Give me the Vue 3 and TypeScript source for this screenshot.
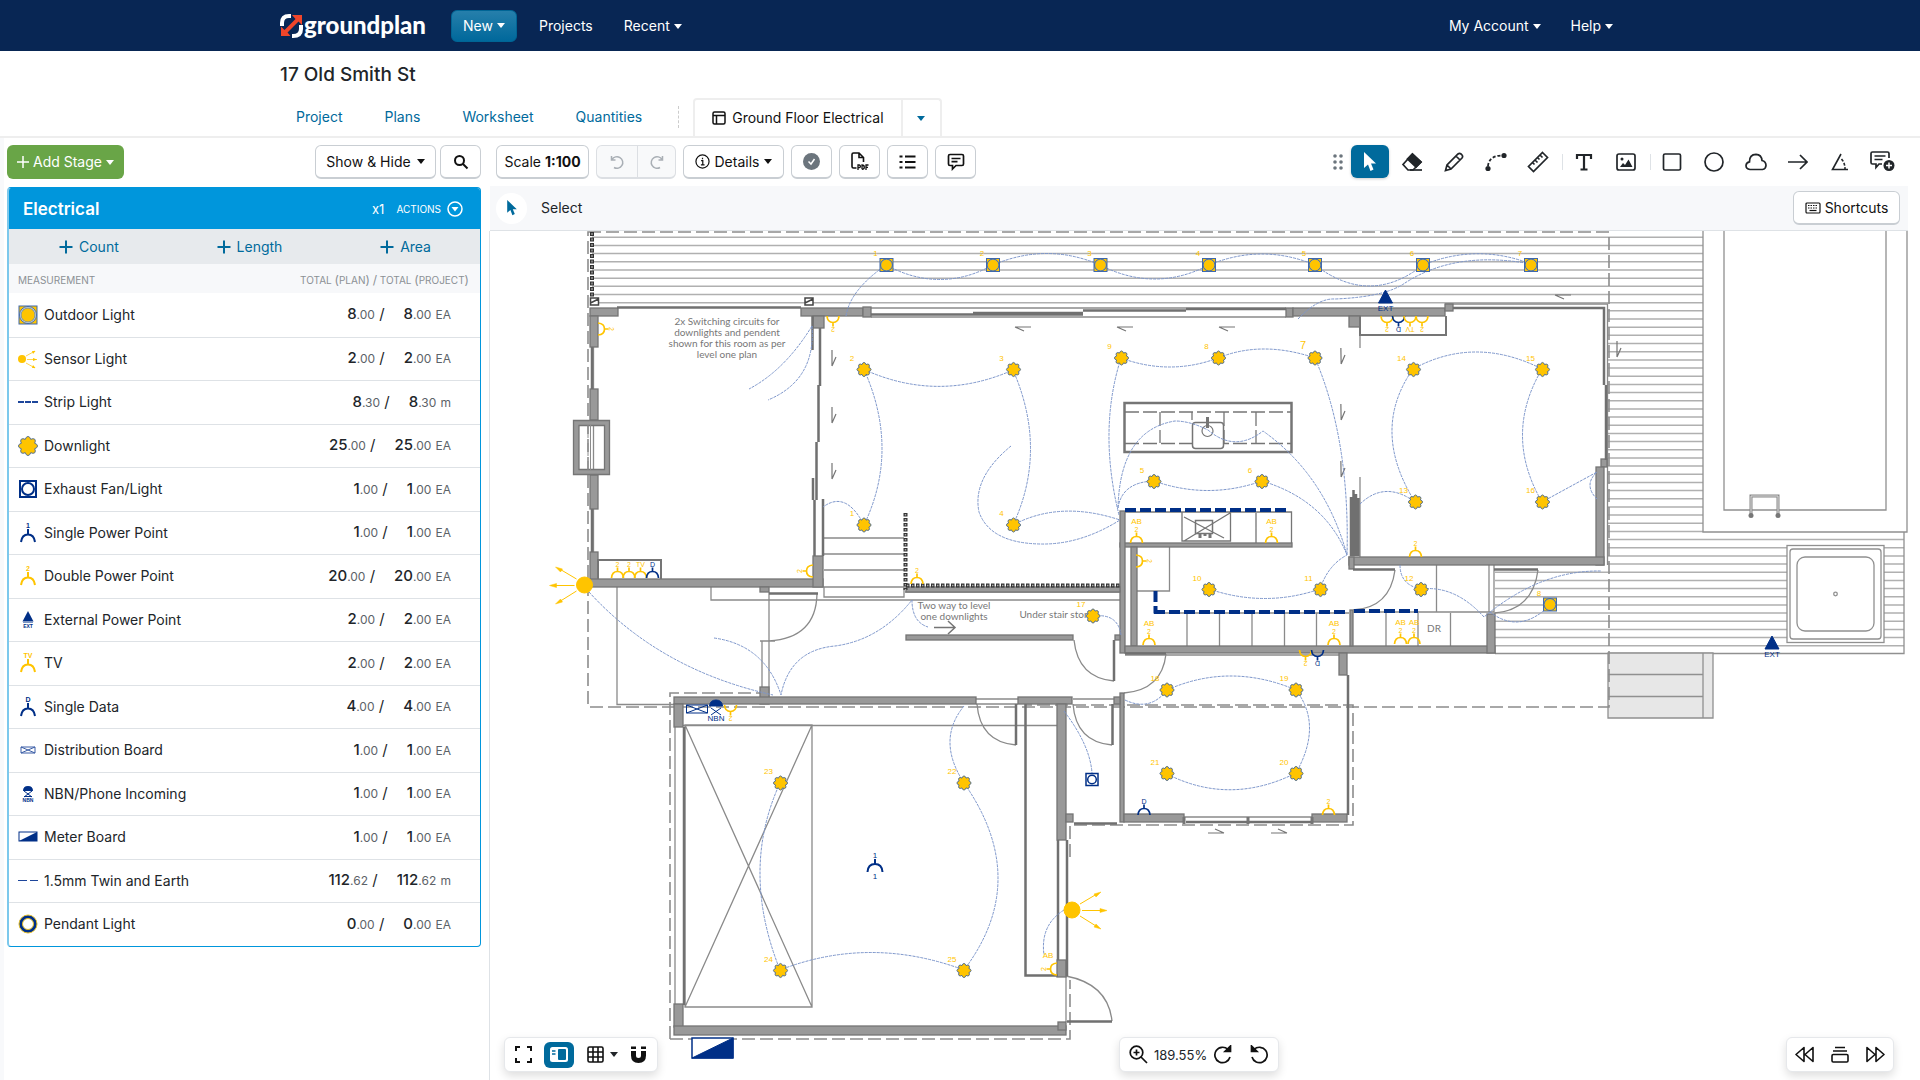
<script setup lang="ts">
type Kind =
  | 'outdoor' | 'sensor' | 'strip' | 'downlight' | 'exhaust' | 'outlet' | 'ext'
  | 'board' | 'nbn' | 'meter' | 'cable' | 'pendant'

interface Measurement {
  name: string
  kind: Kind
  whole: string
  part: string
  unit: string
  tag?: string
  color?: string
}

interface Outlet {
  x: number
  y: number
  turn: number
  tag: string
  color?: string
  ab?: boolean
}

const NAVY = '#002f87'
const AMBER = '#ffc400'

const measurements: Measurement[] = [
  { name: 'Outdoor Light', kind: 'outdoor', whole: '8', part: '.00', unit: 'EA' },
  { name: 'Sensor Light', kind: 'sensor', whole: '2', part: '.00', unit: 'EA' },
  { name: 'Strip Light', kind: 'strip', whole: '8', part: '.30', unit: 'm' },
  { name: 'Downlight', kind: 'downlight', whole: '25', part: '.00', unit: 'EA' },
  { name: 'Exhaust Fan/Light', kind: 'exhaust', whole: '1', part: '.00', unit: 'EA' },
  { name: 'Single Power Point', kind: 'outlet', tag: '1', color: NAVY, whole: '1', part: '.00', unit: 'EA' },
  { name: 'Double Power Point', kind: 'outlet', tag: '2', color: AMBER, whole: '20', part: '.00', unit: 'EA' },
  { name: 'External Power Point', kind: 'ext', whole: '2', part: '.00', unit: 'EA' },
  { name: 'TV', kind: 'outlet', tag: 'TV', color: AMBER, whole: '2', part: '.00', unit: 'EA' },
  { name: 'Single Data', kind: 'outlet', tag: 'D', color: NAVY, whole: '4', part: '.00', unit: 'EA' },
  { name: 'Distribution Board', kind: 'board', whole: '1', part: '.00', unit: 'EA' },
  { name: 'NBN/Phone Incoming', kind: 'nbn', whole: '1', part: '.00', unit: 'EA' },
  { name: 'Meter Board', kind: 'meter', whole: '1', part: '.00', unit: 'EA' },
  { name: '1.5mm Twin and Earth', kind: 'cable', whole: '112', part: '.62', unit: 'm' },
  { name: 'Pendant Light', kind: 'pendant', whole: '0', part: '.00', unit: 'EA' },
]

// Eight-lobed outline of a downlight symbol around the origin.
function lobes(r: number): string {
  const reach = [1.04, 0.96, 0.78, 0.96]
  return Array.from({ length: 32 }, (_, i) => {
    const a = (i / 32) * Math.PI * 2
    const d = r * reach[i % 4]
    return `${(Math.cos(a) * d).toFixed(2)},${(Math.sin(a) * d).toFixed(2)}`
  }).join(' ')
}
const lobesSmall = lobes(6.8)
const lobesLarge = lobes(9.2)

const downlights: [number, number][] = [
  [864, 525], [864, 369.5], [1013.5, 369.5], [1013.5, 525], [1154, 481.5], [1262, 481.5],
  [1315, 358], [1218.5, 358], [1121.5, 358], [1209, 589.5], [1320.5, 589.5], [1421, 589.5],
  [1415.5, 502], [1413.5, 369.5], [1542.5, 369.5], [1542.5, 502], [1093, 616], [1167, 690],
  [1296, 690], [1296, 773.5], [1167, 773.5], [964, 783], [780.5, 783], [780.5, 970.5], [964, 970.5],
]

const outdoorLights: [number, number][] = [
  [886.5, 265], [993, 265], [1100.5, 265], [1209, 265], [1315, 265], [1423, 265], [1531, 265], [1550, 604.5],
]

const outlets: Outlet[] = [
  { x: 617.5, y: 578, turn: 0, tag: '2' },
  { x: 629, y: 578, turn: 0, tag: '2' },
  { x: 640.5, y: 578, turn: 0, tag: 'TV' },
  { x: 652.5, y: 578, turn: 0, tag: 'D', color: NAVY },
  { x: 598, y: 329, turn: 90, tag: '2' },
  { x: 833, y: 316, turn: 180, tag: '2' },
  { x: 813, y: 571, turn: -90, tag: '2' },
  { x: 917, y: 584, turn: 0, tag: '2' },
  { x: 1136.5, y: 543, turn: 0, tag: '2', ab: true },
  { x: 1271.5, y: 543, turn: 0, tag: '2', ab: true },
  { x: 1136, y: 561, turn: 90, tag: '2' },
  { x: 1149, y: 645, turn: 0, tag: '2', ab: true },
  { x: 1334, y: 645, turn: 0, tag: '2', ab: true },
  { x: 1400.5, y: 644, turn: 0, tag: '2', ab: true },
  { x: 1414, y: 644, turn: 0, tag: '2', ab: true },
  { x: 1415.5, y: 557, turn: 0, tag: '2' },
  { x: 1387, y: 316, turn: 180, tag: '2' },
  { x: 1398.5, y: 316, turn: 180, tag: 'D', color: NAVY },
  { x: 1410, y: 316, turn: 180, tag: 'TV' },
  { x: 1422, y: 316, turn: 180, tag: '2' },
  { x: 1305.5, y: 650, turn: 180, tag: '2' },
  { x: 1317.5, y: 650, turn: 180, tag: 'D', color: NAVY },
  { x: 1144, y: 815, turn: 0, tag: 'D', color: NAVY },
  { x: 1328.5, y: 815, turn: 0, tag: '2' },
  { x: 730.5, y: 705, turn: 180, tag: '2' },
  { x: 1057, y: 969, turn: -90, tag: '2' },
]

// Solid walls: x, y, width, height.
const walls: [number, number, number, number][] = [
  [590, 308, 28, 8], [590, 316, 8, 31], [590, 389, 8, 31], [590, 475, 8, 34], [590, 552, 8, 28],
  [590, 579, 233, 8], [801, 308, 62, 8], [813, 316, 11, 12], [813, 556, 10, 31], [863, 307, 8, 10],
  [1286, 308, 7, 9], [1293, 308, 152, 8], [1349, 316, 11, 11], [1445, 304, 8, 7],
  [1601, 459, 6, 8], [1596, 467, 8, 98], [1349, 557, 255, 8], [1349, 557, 5, 12],
  [1120, 543, 172, 4], [1120, 511, 5, 142], [1131, 547, 6, 99], [1125, 646, 370, 7],
  [1350, 610, 3, 36], [1487, 614, 8, 39], [1339, 653, 8, 22], [1120, 693, 4, 129],
  [1124, 814, 60, 8], [1312, 814, 35, 8], [906, 587, 214, 5], [760, 587, 9, 5],
  [760, 687, 9, 17], [674, 697, 302, 7], [674, 704, 9, 23], [674, 1004, 9, 23],
  [674, 1026, 392, 9], [906, 635, 167, 5], [1115, 635, 5, 5], [1018, 697, 54, 7],
  [1057, 704, 9, 136], [1114, 697, 6, 7], [1066, 814, 7, 8], [1057, 960, 9, 17], [1058, 1022, 8, 8],
]

// Heavy strokes for door leaves, sliding panels and window frames.
const heavy = [
  'M617 307.5H801', 'M592 347V389 M592 509V552', 'M812.5 316V350', 'M820 328V386', 'M818.5 385V442', 'M816.5 442V500',
  'M813 478V500 M814.500 500V556 M823 499V556', 'M871 314.500H1083 M973 313H1083 M1083 310.500H1186 M1186 309H1286',
  'M1453 308H1604V385 M1606 385V460', 'M1351 497V556 M1353.500 490V556 M1356 494V556 M1358.500 498V556',
  'M1353 569.500H1395', 'M1494 569.500H1538', 'M769 593.500H818', 'M1114 640V681', 'M1016 704V745', 'M1112.500 704V745',
  'M1125 653.500H1166', 'M1348 675V815', 'M1186 822H1311', 'M1074 823.500H1117', 'M684 727V1005',
  'M1025.500 704V975.500H1058', 'M1058 840V960 M1067 840V976', 'M1067 1021.500H1112',
].join(' ')

// Light strokes: cabinetry, door swings, stairs, landings.
const light = [
  'M593.500 317V579', 'M871 308H1286 M871 317H1286', 'M1445 304H1607.500V565', 'M1360 316V348 M1360 477V557',
  'M824 538H904 M824 554H904 M824 570H904 M824 587H904V597H824Z', 'M617 587V704.500H674 M711 587V600H1120 M905 592H1120',
  'M817 594Q816 638 769 641', 'M769 592V697 M762 641V687', 'M760 641H775', 'M976 699H1018 M976 704H1018 M977 704Q980 742 1016 745',
  'M1074 640Q1078 678 1114 681', 'M1073 699H1114 M1073 704Q1076 742 1112 745', 'M1166 654Q1162 690 1124 693',
  'M1125 655H1339', 'M1395 570Q1390 608 1353 610', 'M1538 570Q1533 610 1494 613', 'M1436.500 565V612 M1489 565V612 M1494 565V612',
  'M1137 591H1169.500V547', 'M1155 613H1349 M1187 613V646 M1219.500 613V646 M1252 613V646 M1284.500 613V646 M1316.500 613V646',
  'M1386 613V646 M1418 613V646 M1450.500 613V646 M1353 612H1494', 'M1184 817H1312', 'M675 727V1004',
  'M683 725.500H1057', 'M685 725H812V1007H685Z M685 725L812 1007 M812 725L685 1007', 'M1066 976V1022 M1066 976Q1108 984 1112 1021',
].join(' ')

const wires = [
  'M846 316Q850 290 886 265Q940 294 993 265Q1047 242 1100 265Q1155 293 1209 265Q1262 243 1315 265Q1370 307 1423 265Q1477 243 1531 264',
  'M1531 264Q1456 250 1405 283Q1385 297 1335 299Q1318 298 1298 319',
  'M864 369.500Q938 403 1013 370Q1048 450 1013 525Q1060 500 1120 520', 'M864 369.500Q900 450 864 525Q846 490 823 507',
  'M1011 446Q972 478 979 512Q990 543 1040 544Q1080 545 1120 520', 'M1121 358Q1170 376 1218 358Q1262 340 1315 358Q1350 440 1347 555',
  'M1121 358Q1098 430 1119 515', 'M1118 508Q1120 430 1175 421Q1190 421 1208 430Q1235 453 1263 431Q1325 475 1347 555',
  'M1118 508Q1122 482 1154 481Q1208 500 1262 481Q1325 500 1347 555', 'M1209 589Q1265 608 1320 589Q1328 565 1347 555',
  'M1415 502Q1370 430 1413 369Q1475 335 1542 369Q1503 435 1542 502L1597 472Q1583 485 1597 499', 'M1360 504Q1385 480 1415 502',
  'M1400 565Q1400 585 1421 589Q1455 585 1484 617Q1540 570 1601 571', 'M1490 612Q1520 635 1550 605',
  'M812 326Q785 370 749 389', 'M812 326Q816 380 768 400', 'M589 592Q660 670 773 695',
  'M714 638Q765 645 781 695Q790 650 835 646Q880 640 912 600Q912 622 928 627', 'M1093 616Q1118 613 1121 635',
  'M1125 700Q1150 712 1167 690Q1230 662 1296 690Q1323 725 1296 773Q1230 806 1167 774', 'M1064 711Q1090 745 1092 773',
  'M964 706Q936 740 964 783Q1032 880 964 970Q870 935 780 970Q740 870 780 783', 'M1064 910Q1040 925 1044 955',
].join(' ')

// Decking boards run edge to edge except where the house covers them.
const deck: string = Array.from({ length: 51 }, (_, k) => {
  const y = Math.round((237.3 + k * 8.17) * 10) / 10
  if (y < 304) return `M592 ${y}H1703`
  if (y < 532) return `M1608 ${y}H1703`
  if (y < 566) return `M1608 ${y}H1904`
  return `M1495 ${y}H1904`
}).join(' ')

const swingMarks: [number, number, number][] = [
  [1023, 327, 0], [1125, 327, 0], [1227, 327, 0], [832, 358, -90], [832, 415, -90], [832, 471, -90],
  [1341, 356, -91], [1341, 412, -91], [1341, 469, -91], [1563, 295, 0], [1617, 349, -90], [1216, 833, 180], [1279, 833, 180],
]
</script>

<template>
  <div class="app">
    <header class="topbar">
      <div class="container">
        <a href="#" class="logo">
          <svg width="23" height="24" viewBox="0 0 23 24" aria-hidden="true">
            <path d="M2 12V9Q2 2 9 2H11M21 11V15Q21 22 13 22H12" fill="none" stroke="#fff" stroke-width="4" />
            <path d="M12 1H22V11L18.500 7.500L7.500 18.500L10.500 22H1V12.500L4.500 16L15.500 5Z" fill="#f0452a" />
          </svg>
          <span>groundplan</span>
        </a>
        <button class="new" type="button">New <i class="caret"></i></button>
        <a href="#" class="nav-link">Projects</a>
        <a href="#" class="nav-link recent">Recent <i class="caret"></i></a>
        <span class="grow"></span>
        <a href="#" class="nav-link account">My Account <i class="caret"></i></a>
        <a href="#" class="nav-link">Help <i class="caret"></i></a>
      </div>
    </header>

    <section class="heading">
      <div class="container column">
        <h1>17 Old Smith St</h1>
        <nav class="tabs">
          <a href="#">Project</a>
          <a href="#">Plans</a>
          <a href="#">Worksheet</a>
          <a href="#">Quantities</a>
          <span class="divider"></span>
          <span class="active-tab">
            <a href="#" class="current">
              <svg width="14" height="14" viewBox="0 0 14 14" fill="none" stroke="#111" stroke-width="1.500"><rect x="1" y="1" width="12" height="12" rx="1.500" /><path d="M1 4.500H13M4.500 4.500V13" /></svg>
              Ground Floor Electrical
            </a>
            <button type="button" class="tab-menu" aria-label="Plan menu"><i class="caret"></i></button>
          </span>
        </nav>
      </div>
    </section>

    <div class="workspace">
      <aside>
        <div class="bar">
          <button type="button" class="add">
            <svg width="12" height="14" viewBox="0 0 12 14" stroke="#fff" stroke-width="1.500"><path d="M6 1V13M0 7H12" /></svg>
            Add Stage <i class="caret"></i>
          </button>
          <span class="grow"></span>
          <button type="button" class="btn show">Show &amp; Hide <i class="caret"></i></button>
          <button type="button" class="btn square" aria-label="Search">
            <svg width="16" height="16" viewBox="0 0 16 16" fill="none" stroke="#111" stroke-width="2"><circle cx="6.500" cy="6.500" r="4.500" /><path d="M10 10L14.500 14.500" /></svg>
          </button>
        </div>

        <section class="stage">
          <div class="stage-head">
            <h2>Electrical</h2>
            <span class="times">x1</span>
            <button type="button" class="actions">
              <span>ACTIONS</span>
              <svg width="16" height="16" viewBox="0 0 16 16"><circle cx="8" cy="8" r="7" fill="none" stroke="#fff" stroke-width="1.500" /><path d="M4.500 6H11.500L8 10.500Z" fill="#fff" /></svg>
            </button>
          </div>
          <div class="adders">
            <button v-for="label in ['Count', 'Length', 'Area']" :key="label" type="button">
              <svg width="14" height="14" viewBox="0 0 14 14" stroke="#006a9c" stroke-width="2"><path d="M7 0.500V13.500M0.500 7H13.500" /></svg>
              {{ label }}
            </button>
          </div>
          <table>
            <thead>
              <tr><th>MEASUREMENT</th><th class="right">TOTAL <i>(</i>PLAN<i>)</i> <i>/</i> TOTAL <i>(</i>PROJECT<i>)</i></th></tr>
            </thead>
            <tbody>
              <tr v-for="m in measurements" :key="m.name">
                <td>
                  <span class="name">
                    <svg width="20" height="20" viewBox="-10 -10 20 20" aria-hidden="true">
                      <template v-if="m.kind === 'outdoor'">
                        <rect x="-9" y="-9" width="18" height="18" :fill="AMBER" stroke="#3f68ab" />
                        <circle r="8.500" fill="#dfe6f0" stroke="#3f68ab" /><circle r="7" :fill="AMBER" stroke="#7990a0" />
                      </template>
                      <template v-else-if="m.kind === 'sensor'">
                        <circle cx="-6" r="4" :fill="AMBER" />
                        <path d="M-2 -3L7 -8M-1 0.500H9M-2 4L7 9" :stroke="AMBER" stroke-width="0.700" />
                        <path d="M4 -8L7.500 -8L5 -5ZM5 -1L9 0.500L5 2ZM4 9L7.500 9L5 6Z" :fill="AMBER" />
                      </template>
                      <path v-else-if="m.kind === 'strip'" d="M-10 0H10" stroke="#1d469b" stroke-width="2" stroke-dasharray="6 1" />
                      <polygon v-else-if="m.kind === 'downlight'" :points="lobesLarge" :fill="AMBER" stroke="#56718f" />
                      <template v-else-if="m.kind === 'exhaust'">
                        <rect x="-8" y="-8" width="16" height="16" fill="#fff" :stroke="NAVY" stroke-width="2" />
                        <circle r="6" fill="none" :stroke="NAVY" stroke-width="2" />
                      </template>
                      <template v-else-if="m.kind === 'outlet'">
                        <path d="M-7 9Q-6 1.500 0 1.500Q6 1.500 7 9M0 1V-4" fill="none" :stroke="m.color" stroke-width="2" />
                        <text y="-5" class="tag" :fill="m.color">{{ m.tag }}</text>
                      </template>
                      <template v-else-if="m.kind === 'ext'">
                        <path d="M0 -9L5.500 1.500H-5.500Z" :fill="NAVY" /><path d="M-5 2.500H5" stroke="#7f97c3" />
                        <text y="8" class="tag small" :fill="NAVY">EXT</text>
                      </template>
                      <path v-else-if="m.kind === 'board'" d="M-7 -3H7V3H-7ZM-7 -3L7 3M-7 3L7 -3" fill="none" stroke="#3a5da6" />
                      <template v-else-if="m.kind === 'nbn'">
                        <path d="M-5 -3Q-5 -8 0 -8Q5 -8 5 -3Z" :fill="NAVY" /><path d="M-4 -3L4 3M4 -3L-4 3M-4 2.500H4" :stroke="NAVY" />
                        <text y="8" class="tag small" :fill="NAVY">NBN</text>
                      </template>
                      <template v-else-if="m.kind === 'meter'">
                        <rect x="-9" y="-5" width="18" height="9" fill="#fff" :stroke="NAVY" /><path d="M-9 4L9 -5V4Z" :fill="NAVY" />
                      </template>
                      <path v-else-if="m.kind === 'cable'" d="M-10 -0.500H-1M2 -0.500H10" stroke="#1d469b" />
                      <template v-else>
                        <circle r="9" :fill="NAVY" stroke="#e2bc2a" /><circle r="5.500" fill="#fff" stroke="#e2bc2a" />
                      </template>
                    </svg>
                    {{ m.name }}
                  </span>
                </td>
                <td class="totals">
                  <span><b>{{ m.whole }}</b><small>{{ m.part }}</small> /</span>
                  <span class="project"><b>{{ m.whole }}</b><small>{{ m.part }}</small> <em>{{ m.unit }}</em></span>
                </td>
              </tr>
            </tbody>
          </table>
        </section>
      </aside>

      <main>
        <div class="bar tools">
          <button type="button" class="btn scale">Scale <b>1:100</b></button>
          <span class="pair">
            <button type="button" aria-label="Undo"><svg width="16" height="16" viewBox="0 0 16 16" fill="none" stroke="#a9afb5" stroke-width="1.500"><path d="M2.500 2V6H6.500M3 5.500A5.800 5.800 0 1 1 5 13.500" /></svg></button>
            <button type="button" aria-label="Redo"><svg width="16" height="16" viewBox="0 0 16 16" fill="none" stroke="#a9afb5" stroke-width="1.500"><path d="M13.500 2V6H9.500M13 5.500A5.800 5.800 0 1 0 11 13.500" /></svg></button>
          </span>
          <button type="button" class="btn details">
            <svg width="15" height="15" viewBox="0 0 16 16" fill="none" stroke="#111" stroke-width="1.300"><circle cx="8" cy="8" r="7" /><path d="M6.500 7H8.300V11.500M6.300 11.500H10.200M8 4V5.500" /></svg>
            Details <i class="caret"></i>
          </button>
          <button type="button" class="btn square" aria-label="Approve"><svg width="17" height="17" viewBox="0 0 17 17"><circle cx="8.500" cy="8.500" r="8.500" fill="#6c757d" /><path d="M5.500 8.500L8 11L11.500 6" fill="none" stroke="#fff" stroke-width="1.500" /></svg></button>
          <button type="button" class="btn square" aria-label="Export PDF">
            <svg width="19" height="19" viewBox="0 0 19 19" fill="none" stroke="#111" stroke-width="1.600"><path d="M6.500 16H3.500Q2 16 2 14.500V2.500Q2 1 3.500 1H9L13.500 5.500V10M9 1V5.500H13.500" /><path d="M8 18V13H9.300Q10.400 13.200 10.400 14.300Q10.400 15.500 9.300 15.700H8M12 17.300V13Q14.300 13 14.300 15.200Q14.300 17.300 12 17.300M16 18V13H18.500M16 15.400H18" stroke-width="1.300" /></svg>
          </button>
          <button type="button" class="btn square" aria-label="List"><svg width="17" height="16" viewBox="0 0 17 16" stroke="#111" stroke-width="1.800"><path d="M6 2.500H16.500M6 8H16.500M6 13.500H16.500M0.500 2.500H3.500M0.500 8H3.500M0.500 13.500H3.500" /></svg></button>
          <button type="button" class="btn square" aria-label="Comments"><svg width="18" height="18" viewBox="0 0 18 18" fill="none" stroke="#111" stroke-width="1.700"><path d="M3 1.500H15Q16.500 1.500 16.500 3V11Q16.500 12.500 15 12.500H9L5.500 16V12.500H3Q1.500 12.500 1.500 11V3Q1.500 1.500 3 1.500ZM4.500 5.500H13.500M4.500 8.700H10.500" /></svg></button>
          <span class="grow"></span>
          <svg class="grip" width="10" height="16" viewBox="0 0 10 16" fill="#6c757d"><circle v-for="n in 6" :key="n" :cx="n % 2 ? 2 : 8" :cy="2 + Math.floor((n - 1) / 2) * 6" r="1.800" /></svg>
          <button type="button" class="tool on" aria-label="Select"><svg width="14" height="20" viewBox="0 0 14 20" fill="#fff"><path d="M1 0V16L5 12.500L7.500 19L10.500 17.500L8 11.500H13Z" /></svg></button>
          <button type="button" class="tool" aria-label="Erase"><svg width="22" height="20" viewBox="0 0 22 20" fill="none" stroke="#212529" stroke-width="1.700"><path d="M11.500 2L20 10L12 18H7L2 12.500Z" /><path d="M11.500 2L20 10L15 15L6.500 7Z" fill="#212529" /><path d="M9 18H21" /></svg></button>
          <button type="button" class="tool" aria-label="Draw"><svg width="20" height="20" viewBox="0 0 20 20" fill="none" stroke="#212529" stroke-width="1.700"><path d="M1.500 18.500L3 13L14 2Q15.500 0.800 17 2L18 3Q19.200 4.500 18 6L7 17ZM12 4L16 8M3 13L7 17" /></svg></button>
          <button type="button" class="tool" aria-label="Curve"><svg width="22" height="20" viewBox="0 0 22 20"><circle cx="3" cy="16.500" r="2.600" fill="#212529" /><circle cx="19" cy="3.500" r="2.600" fill="#212529" /><path d="M3 14Q4 4 16 3.500" fill="none" stroke="#212529" stroke-width="1.800" stroke-dasharray="3 2" /></svg></button>
          <button type="button" class="tool" aria-label="Measure"><svg width="22" height="22" viewBox="0 0 22 22" fill="none" stroke="#212529" stroke-width="1.700"><path d="M15.500 1.500L20.500 6.500L6.500 20.500L1.500 15.500ZM13 4L15.500 6.500M10.500 6.500L12.500 8.500M8 9L10.500 11.500M5.500 11.500L7.500 13.500" /></svg></button>
          <span class="rule"></span>
          <button type="button" class="tool" aria-label="Text"><svg width="18" height="18" viewBox="0 0 18 18" fill="none" stroke="#212529" stroke-width="2"><path d="M2 6V2H16V6M9 2V16.500" stroke-width="2.200" /><path d="M5.500 16.500H12.500" /></svg></button>
          <button type="button" class="tool" aria-label="Image"><svg width="20" height="18" viewBox="0 0 20 18" fill="none" stroke="#212529" stroke-width="1.700"><rect x="1" y="1" width="18" height="16" rx="2" /><circle cx="6" cy="6" r="1.500" fill="#212529" stroke="none" /><path d="M4 14L7 10L9 12L12.500 6.500L16.500 14Z" fill="#212529" stroke="none" /></svg></button>
          <span class="rule"></span>
          <button type="button" class="tool" aria-label="Rectangle"><svg width="20" height="18" viewBox="0 0 20 18" fill="none" stroke="#212529" stroke-width="1.700"><rect x="1.500" y="1" width="17" height="16" rx="1.500" /></svg></button>
          <button type="button" class="tool" aria-label="Ellipse"><svg width="20" height="20" viewBox="0 0 20 20" fill="none" stroke="#212529" stroke-width="1.700"><circle cx="10" cy="10" r="9" /></svg></button>
          <button type="button" class="tool" aria-label="Cloud"><svg width="22" height="18" viewBox="0 0 22 18" fill="none" stroke="#212529" stroke-width="1.700"><path d="M5 16.500Q1 16 1 12.500Q1.200 9.500 4.500 8.800Q4.300 1.500 11 1.300Q16.500 1.500 17 7.500Q21 8.500 21 12.500Q20.800 16 17.500 16.500Z" /></svg></button>
          <button type="button" class="tool" aria-label="Arrow"><svg width="20" height="16" viewBox="0 0 20 16" fill="none" stroke="#212529" stroke-width="1.700"><path d="M0 8H19M12 1L19 8L12 15" /></svg></button>
          <button type="button" class="tool" aria-label="Angle"><svg width="18" height="18" viewBox="0 0 18 18" fill="none" stroke="#212529" stroke-width="1.600"><path d="M10 1L1.500 16.500H17" /><path d="M10.500 6Q14 10 14 16" stroke-dasharray="3 1.500" /></svg></button>
          <button type="button" class="tool" aria-label="Add comment"><svg width="25" height="21" viewBox="0 0 25 21"><path d="M12 13H9L6 16.500V13H2.500Q1 13 1 11.500V2.500Q1 1 2.500 1H17.500Q19 1 19 2.500V7M4.500 5H15.500M4.500 8.500H12.500" fill="none" stroke="#212529" stroke-width="1.700" /><circle cx="19" cy="14.500" r="5.500" fill="#212529" /><path d="M19 11.500V17.500M16 14.500H22" stroke="#fff" stroke-width="1.500" /></svg></button>
        </div>

        <div class="options">
          <span class="dot"><svg width="12" height="16" viewBox="0 0 14 20" fill="#006a9c"><path d="M1 0V16L5 12.500L7.500 19L10.500 17.500L8 11.500H13Z" /></svg></span>
          <span>Select</span>
          <span class="grow"></span>
          <button type="button" class="btn shortcuts">
            <svg width="16" height="12" viewBox="0 0 16 12" fill="none" stroke="#111" stroke-width="1.200"><rect x="1" y="1" width="14" height="10" rx="1" /><path d="M3 3.500H13M3 6H13" stroke-dasharray="1.500 1" /><path d="M4.500 8.500H11.500" /></svg>
            Shortcuts
          </button>
        </div>

        <div class="canvas">
          <svg class="plan" viewBox="490 231 1418 849" role="img" aria-label="Ground floor electrical plan">
            <path :d="deck" stroke="#b0b0b0" stroke-width="1.500" />
            <g fill="#fff" stroke="#909090" stroke-width="1.300">
              <path d="M1703 220H1907V532H1703Z M1724 220H1886V510H1724Z" />
              <path d="M1904 532V653.500H1495" fill="none" />
              <rect x="1787" y="545.500" width="97" height="97" />
              <rect x="1790" y="549" width="91" height="90" rx="3" />
              <rect x="1797" y="557" width="77" height="74" rx="8" />
              <circle cx="1835.500" cy="594" r="1.800" />
              <path d="M1608 653H1713V718H1608ZM1608 674.500H1703M1608 696.500H1703M1703 653V718" fill="#e7e7e7" />
            </g>
            <path d="M1751 515V496H1778V515" fill="none" stroke="#888" stroke-width="3" />
            <path d="M1751 515V496H1778V515" fill="none" stroke="#ddd" />
            <circle cx="1751" cy="515.500" r="2.500" fill="#777" /><circle cx="1778" cy="515.500" r="2.500" fill="#777" />

            <path d="M588 232H1609V707H588ZM670 1039V693H760M670 1039H1070V980M1070 857V825H1353V705H1025" fill="none" stroke="#8c8c8c" stroke-width="1.600" stroke-dasharray="13 5" />
            <path d="M592 232V297" stroke="#333" stroke-width="4" stroke-dasharray="4 1.500" />
            <path d="M592 232V297" stroke="#999" stroke-width="1.500" stroke-dasharray="2 3.500" stroke-dashoffset="-1" />
            <g fill="#fff" stroke="#444" stroke-width="1.500"><path d="M590.500 298H598.500V305H590.500ZM590.500 303L598.500 299M805 298H813V305H805ZM805 303L813 299" /></g>

            <path :d="light" fill="none" stroke="#8a8a8a" stroke-width="1.300" />
            <g fill="#999" stroke="#757575" stroke-width="1.300">
              <rect v-for="(w, i) in walls" :key="i" :x="w[0]" :y="w[1]" :width="w[2]" :height="w[3]" />
              <path d="M573.500 420.500H609.500V474.500H573.500ZM579 425.500V469.500H604.500V425.500Z" fill-rule="evenodd" />
            </g>
            <path :d="heavy" fill="none" stroke="#707070" stroke-width="2.500" />
            <path d="M588 425V470" stroke="#8c8c8c" stroke-dasharray="13 5" /><path d="M590.500 425V470" stroke="#8c8c8c" />

            <g fill="none" stroke="#757575" stroke-width="2">
              <path d="M598 579V560H661V579" /><path d="M1360 316V335H1446V316" />
              <rect x="1124.500" y="403" width="167" height="49" stroke-width="2.500" />
              <path d="M1125 412H1291M1125 443.500H1291M1160 412V443M1192 412V420M1224 412V443M1256 412V443" stroke-width="1.300" stroke-dasharray="14 4" />
              <rect x="1192.500" y="422.500" width="31" height="26" rx="3" fill="#fff" stroke-width="1.500" />
              <circle cx="1207.500" cy="431" r="5.500" stroke-width="1.200" /><path d="M1207.500 417V428" stroke-width="3" />
              <path d="M1125 512H1291.500V543M1182 512V541H1230.500V512M1184 541L1230 513M1184 517L1224 538M1256 513V543" stroke-width="1.300" />
              <rect x="1195.500" y="520.500" width="17" height="13" stroke-width="1.500" /><path d="M1200 533V538M1205 533V536M1210 533V538" stroke-width="3" />
              <path d="M1184 817V824M1248 817V824M1312 817V824" stroke-width="3" />
              <path d="M934 627.500H955M948 621L955 627.500L948 634" stroke-width="1.500" />
              <path v-for="(s, i) in swingMarks" :key="i" d="M-8 0H8M-8 0L1 4" :transform="`translate(${s[0]} ${s[1]}) rotate(${s[2]})`" stroke-width="1.200" />
            </g>
            <path d="M905.500 513V590" stroke="#333" stroke-width="4" stroke-dasharray="3.500 1.500" />
            <path d="M905.500 514V590" stroke="#aaa" stroke-width="1.500" stroke-dasharray="1.500 3.500" />
            <path d="M906 585.500H1120" stroke="#333" stroke-width="4" stroke-dasharray="3.500 1.500" />
            <path d="M907 585.500H1120" stroke="#aaa" stroke-width="1.500" stroke-dasharray="1.500 3.500" />

            <g class="note">
              <text x="727" y="325">2x Switching circuits for</text>
              <text x="727" y="336">downlights and pendent</text>
              <text x="727" y="347">shown for this room as per</text>
              <text x="727" y="358">level one plan</text>
              <text x="954" y="609">Two way to level</text>
              <text x="954" y="620">one downlights</text>
              <text x="1056" y="618">Under stair store</text>
              <text x="1434" y="632">DR</text>
            </g>

            <path :d="wires" fill="none" stroke="#7d96cb" stroke-dasharray="3 1" />
            <path d="M1125 510H1289M1155.500 591V613.500M1154 612H1349M1354 611H1418" stroke="#002f87" stroke-width="4" stroke-dasharray="11 4" />

            <g v-for="(p, i) in outdoorLights" :key="'o' + i" :transform="`translate(${p[0]} ${p[1]})`">
              <rect x="-6.500" y="-6.500" width="13" height="13" :fill="AMBER" stroke="#3f68ab" />
              <circle r="6" fill="#8fa3a8" stroke="#3f68ab" /><circle r="5.200" :fill="AMBER" />
              <text class="num" x="-11" y="-9">{{ i + 1 }}</text>
            </g>
            <g v-for="(p, i) in downlights" :key="'d' + i" :transform="`translate(${p[0]} ${p[1]})`">
              <polygon :points="lobesSmall" :fill="AMBER" stroke="#56718f" />
              <text class="num" :class="{ big: i === 6 }" x="-12" y="-9">{{ i + 1 }}</text>
            </g>
            <g v-for="(o, i) in outlets" :key="'p' + i" :transform="`translate(${o.x} ${o.y})`">
              <g :transform="`rotate(${o.turn})`">
                <path d="M-6 0Q-5.500 -6.500 0 -6.500Q5.500 -6.500 6 0M0 -6.500V-10.500" fill="none" :stroke="o.color ?? AMBER" stroke-width="1.700" />
                <text class="mark" y="-11" :fill="o.color ?? AMBER">{{ o.tag }}</text>
              </g>
              <text v-if="o.ab" class="num" y="-19">AB</text>
            </g>
            <text class="num" x="1048" y="957.500">AB</text>

            <g :fill="NAVY" :stroke="NAVY">
              <path d="M867.500 872Q868 864 875 864Q882 864 882.500 872M875 864V859" fill="none" stroke-width="2" />
              <path d="M1385.500 290L1392.500 303H1378.500ZM1772 636L1779 649H1765Z" />
              <path d="M709.500 706Q710 700 716 700Q722 700 722.500 706Z" />
              <path d="M711 708L721 715M721 708L711 715M686.500 705H707.500V713H686.500ZM686.500 705L707.500 713M686.500 713L707.500 705" fill="none" />
              <rect x="692" y="1038" width="41" height="20" fill="#fff" stroke-width="1.500" /><path d="M692 1058L733 1038V1058Z" />
              <rect x="1086" y="773.500" width="12" height="12" fill="#fff" stroke-width="1.500" /><circle cx="1092" cy="779.500" r="4.300" fill="none" stroke-width="1.500" />
            </g>
            <g class="navy">
              <text x="1385.500" y="311">EXT</text><text x="1772" y="657">EXT</text><text x="716" y="721">NBN</text>
              <text x="875" y="858">1</text><text x="875" y="879">1</text>
            </g>
            <g v-for="(s, i) in [[584.5, 585, -1], [1072, 910, 1]]" :key="'s' + i" :transform="`translate(${s[0]} ${s[1]}) scale(${s[2]} 1)`" :fill="AMBER" :stroke="AMBER">
              <circle r="8" />
              <path d="M8 -6L24 -15.500M10 0.500H29M8 6L24 16" />
              <path d="M29 -18L22 -16L24 -13ZM35 0.500L28 -1.500V2.500ZM29 19L22 17L24 14Z" stroke-width="0.500" />
            </g>
          </svg>

          <div class="dock left">
            <button type="button" aria-label="Fit"><svg width="17" height="17" viewBox="0 0 17 17" fill="none" stroke="#111" stroke-width="2"><path d="M1 5V1H5M12 1H16V5M16 12V16H12M5 16H1V12" /></svg></button>
            <button type="button" class="lit" aria-label="Sidebar"><svg width="18" height="15" viewBox="0 0 18 15"><rect width="18" height="15" rx="2.500" fill="#fff" /><rect x="8" y="2" width="8" height="11" rx="1" fill="#006a9c" /><path d="M2 4H5.500M2 7H5.500" stroke="#006a9c" stroke-width="1.500" /></svg></button>
            <button type="button" class="grid" aria-label="Grid"><svg width="17" height="17" viewBox="0 0 17 17" fill="none" stroke="#111" stroke-width="1.600"><rect x="1" y="1" width="15" height="15" rx="1.500" /><path d="M1 6H16M1 11H16M6 1V16M11 1V16" /></svg><i class="caret"></i></button>
            <button type="button" aria-label="Snap"><svg width="17" height="18" viewBox="0 0 17 18" fill="none" stroke="#111" stroke-width="5"><path d="M3.500 0.500V3M13.500 0.500V3" /><path d="M3.500 5V9.500Q3.500 14.500 8.500 14.500Q13.500 14.500 13.500 9.500V5" /></svg></button>
          </div>
          <div class="dock middle">
            <button type="button" aria-label="Zoom in"><svg width="19" height="19" viewBox="0 0 19 19" fill="none" stroke="#111" stroke-width="1.700"><circle cx="7.500" cy="7.500" r="6.300" /><path d="M12 12L18 18M7.500 4.500V10.500M4.500 7.500H10.500" /></svg></button>
            <span class="percent">189.55%</span>
            <button type="button" aria-label="Rotate right"><svg width="19" height="19" viewBox="0 0 19 19" fill="none" stroke="#111" stroke-width="1.700"><path d="M15 4.500A7.700 7.700 0 1 0 17 12" /><path d="M17.500 1V6.500H12Z" fill="#111" /></svg></button>
            <button type="button" class="last" aria-label="Rotate left"><svg width="19" height="19" viewBox="0 0 19 19" fill="none" stroke="#111" stroke-width="1.700"><path d="M4 4.500A7.700 7.700 0 1 1 2 12" /><path d="M1.500 1V6.500H7Z" fill="#111" /></svg></button>
          </div>
          <div class="dock right-dock">
            <button type="button" aria-label="Previous plan"><svg width="19" height="17" viewBox="0 0 19 17" fill="none" stroke="#111" stroke-width="1.600" stroke-linejoin="round"><path d="M9 1.500V15.500L1 8.500ZM18 1.500V15.500L10 8.500Z" /></svg></button>
            <button type="button" aria-label="Plans"><svg width="18" height="17" viewBox="0 0 18 17" fill="none" stroke="#111" stroke-width="1.600"><rect x="1" y="8.500" width="16" height="7.500" rx="1.200" /><path d="M2 5H16M4 1.500H14" /></svg></button>
            <button type="button" aria-label="Next plan"><svg width="19" height="17" viewBox="0 0 19 17" fill="none" stroke="#111" stroke-width="1.600" stroke-linejoin="round"><path d="M1 1.500V15.500L9 8.500ZM10 1.500V15.500L18 8.500Z" /></svg></button>
          </div>
        </div>
      </main>
    </div>
  </div>
</template>

<style>
body {
  margin: 0;
  background: #fff;
}
</style>

<style scoped>
.app {
  font-family: Inter, "Liberation Sans", sans-serif;
  font-size: 14px;
  line-height: 20px;
  color: #212529;
  min-height: 100vh;
}
.app * {
  box-sizing: border-box;
}
button {
  font: inherit;
  color: inherit;
  margin: 0;
  padding: 0;
  border: 0;
  background: none;
  display: flex;
  align-items: center;
  justify-content: center;
  white-space: nowrap;
}
svg {
  flex: none;
}
a {
  text-decoration: none;
}
.grow {
  flex: 1;
}
.caret {
  display: inline-block;
  border: 4px solid transparent;
  border-top: 5px solid currentColor;
  border-bottom: 0;
  vertical-align: 2px;
}
.topbar {
  background: #082654;
  height: 51px;
  display: flex;
}
.container {
  width: 100%;
  max-width: 1360px;
  margin: 0 auto;
  padding-right: 27px;
  display: flex;
  align-items: center;
}
.logo {
  display: flex;
  align-items: center;
  color: #fff;
  font: 900 24px/28px Lato, sans-serif;
  width: 148px;
  gap: 1px;
}
.logo span {
  padding-bottom: 2px;
}
.new {
  width: 66px;
  height: 32px;
  margin: 0 22px 0 23px;
  color: #fff;
  gap: 4px;
  border: 1px solid #006595;
  border-radius: 6px;
  background: linear-gradient(#267fab, #00689b);
}
.nav-link {
  color: #fff;
}
.recent {
  margin-left: 31px;
}
.account {
  margin-right: 30px;
}
.heading {
  border-bottom: 2px solid #eee;
  height: 87px;
  display: flex;
}
.column {
  flex-direction: column;
  align-items: stretch;
  padding-right: 0;
}
h1 {
  font-size: 19px;
  line-height: 24px;
  font-weight: 500;
  margin: 12px 0 11px;
}
.tabs {
  display: flex;
  align-items: center;
  height: 38px;
  padding-left: 16px;
}
.tabs a {
  color: #006a9c;
  margin-right: 42px;
}
.divider {
  height: 22px;
  border-left: 1px dashed #ccc;
  margin: 0 14px 0 -6px;
}
.active-tab {
  display: flex;
  height: 38px;
  background: #fff;
  border: 2px solid #eee;
  border-bottom: 0;
  border-radius: 4px 4px 0 0;
}
.tabs .current {
  display: flex;
  align-items: center;
  gap: 6px;
  color: #111;
  margin: 0;
  padding: 0 17px;
}
.tab-menu {
  width: 39px;
  color: #006a9c;
  border-left: 2px solid #eee;
}
.workspace {
  display: flex;
  margin-right: 12px;
  border-left: 4px solid #f8f9fb;
}
aside {
  width: 486px;
  flex: none;
  padding: 0 9px 0 3px;
}
main {
  flex: 1;
  min-width: 0;
}
.bar {
  display: flex;
  align-items: center;
  padding-top: 7px;
}
.add {
  width: 117px;
  height: 34px;
  gap: 4px;
  color: #fff;
  background: #69a547;
  border-radius: 6px;
}
.btn {
  height: 34px;
  border: 1px solid #c9ced3;
  border-bottom-width: 2px;
  border-radius: 6px;
  background: #fff;
  color: #111;
}
.scale {
  width: 93px;
  gap: 4px;
}
.show {
  width: 121px;
  gap: 6px;
  margin-right: 4px;
}
.square {
  width: 41px;
}
.stage {
  margin-top: 8px;
  border: 1px solid #0096dc;
  border-left: 2px solid #7cc8ec;
  border-radius: 4px;
  overflow: hidden;
}
.stage-head {
  height: 41px;
  display: flex;
  align-items: center;
  background: #0096dc;
  color: #fff;
  padding: 0 17px 0 14px;
}
h2 {
  flex: 1;
  margin: 0;
  font-size: 17px;
  font-weight: 600;
}
.times {
  margin-right: 12px;
  font-size: 13px;
}
.actions {
  gap: 6px;
}
.actions span {
  font-size: 10px;
}
.adders {
  display: flex;
  justify-content: space-between;
  height: 35px;
  background: #e7eaed;
  color: #006a9c;
  padding: 0 49px 0 50px;
}
.adders button {
  gap: 6px;
}
table {
  width: 100%;
  border-collapse: collapse;
}
th {
  height: 29px;
  padding: 2px 0 0 9px;
  background: #f7f8fa;
  color: #8b9095;
  font-size: 10px;
  font-weight: 400;
  text-align: left;
}
th.right {
  text-align: right;
  padding-right: 11px;
}
th i {
  font-size: 12px;
  font-style: normal;
}
tbody tr {
  height: 43px;
}
tbody tr:nth-child(odd) {
  height: 44px;
}
td {
  padding: 0;
}
tbody tr:not(:last-child) td {
  border-bottom: 1px solid #dee2e6;
}
.name {
  display: flex;
  align-items: center;
  gap: 6px;
  padding-left: 9px;
}
.totals {
  text-align: right;
  padding-right: 29px;
  font-size: 15px;
}
.totals b {
  font-weight: 500;
}
.totals small,
.totals em {
  font-size: 12px;
  font-style: normal;
  color: #5c6268;
}
.project {
  margin-left: 19px;
}
.tag,
.mark,
.num,
.navy text {
  font-family: "Liberation Sans", sans-serif;
  font-size: 7px;
  text-anchor: middle;
}
.tag {
  font-weight: 700;
}
.tag.small {
  font-size: 5px;
}
.num {
  font-size: 8px;
  fill: #ffc400;
}
.num.big {
  font-size: 11px;
}
.navy text {
  font-size: 8px;
  fill: #002f87;
}
.note text {
  font-family: Lato, sans-serif;
  font-size: 10px;
  text-anchor: middle;
  fill: #777;
}
.tools {
  padding-left: 6px;
  padding-right: 7px;
  gap: 7px;
}
.pair {
  display: flex;
  height: 34px;
  border: 1px solid #dcdfe3;
  border-bottom-width: 2px;
  border-radius: 6px;
  background: #f8f9fa;
}
.pair button {
  width: 40px;
}
.pair button + button {
  border-left: 1px solid #dcdfe3;
  width: 38px;
}
.details {
  width: 101px;
  gap: 5px;
}
.tool {
  width: 38px;
  height: 33px;
  border-radius: 6px;
  margin: 0 0 1px -3px;
}
.tool.on {
  background: #006a9c;
  margin-left: 1px;
  box-shadow: 0 1px 3px #0003;
}
.rule {
  width: 1px;
  height: 16px;
  margin: 0 -2px;
  background: #dee2e6;
}
.options {
  display: flex;
  align-items: center;
  margin-top: 7px;
  height: 45px;
  padding: 0 8px 0 6px;
  background: #f7f8fa;
  border-bottom: 1px solid #dee2e6;
}
.dot {
  display: flex;
  align-items: center;
  justify-content: center;
  width: 31px;
  height: 31px;
  border-radius: 50%;
  background: #fff;
  margin-right: 14px;
}
.shortcuts {
  width: 107px;
  gap: 4px;
}
.canvas {
  position: relative;
  box-shadow: -1px 0 #dee2e6;
}
.plan {
  display: block;
  width: 100%;
  height: auto;
}
.dock {
  position: absolute;
  bottom: 8px;
  display: flex;
  align-items: center;
  height: 35px;
  border: 1px solid #e6e8eb;
  border-radius: 6px;
  background: #fff;
  box-shadow: 0 4px 10px #0002;
}
.dock.left {
  left: 14px;
  width: 154px;
  justify-content: space-between;
  padding: 0 10px;
}
.lit {
  width: 30px;
  height: 26px;
  border-radius: 6px;
  background: #006a9c;
}
.grid {
  gap: 6px;
}
.dock.middle {
  left: 50%;
  width: 160px;
  margin-left: -80px;
  padding: 0 9px;
  gap: 6px;
}
.percent {
  font-size: 13px;
}
.last {
  margin-left: auto;
}
.right-dock {
  right: 14px;
  width: 108px;
  padding: 0 8px;
  justify-content: space-between;
}
</style>
